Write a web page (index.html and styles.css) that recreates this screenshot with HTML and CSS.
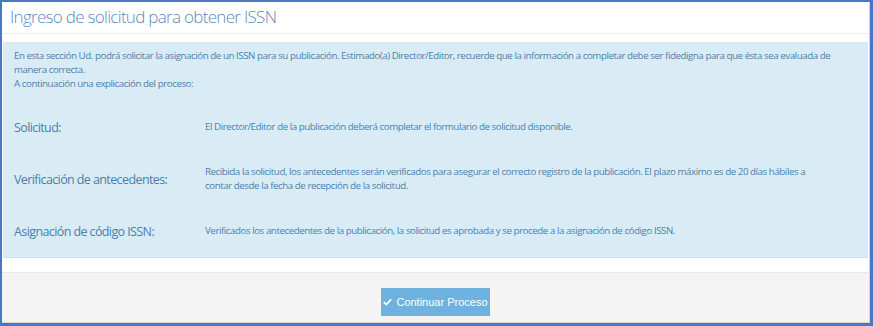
FILE: index.html
```html
<!DOCTYPE html>
<html lang="es">
<head>
<meta charset="utf-8"/>
<meta content="width=device-width, initial-scale=1.0" name="viewport"/>
<title>Ingreso de solicitud ISSN</title>
<link rel="stylesheet" href="styles.css">
</head>
<body>
<div class="frame">
  <div class="panel">
    <div class="panel-heading">
      <h3 class="panel-title">Ingreso de solicitud para obtener ISSN</h3>
    </div>
    <div class="panel-body">
      <div class="alert-info">
        <p class="intro">En esta sección Ud. podrá solicitar la asignación de un ISSN para su publicación. Estimado(a) Director/Editor, recuerde que la información a completar debe ser fidedigna para que ésta sea evaluada de manera correcta.<br>A continuación una explicación del proceso:</p>
        <div class="step">
          <div class="step-name">Solicitud:</div>
          <div class="step-text">El Director/Editor de la publicación deberá completar el formulario de solicitud disponible.</div>
        </div>
        <div class="step">
          <div class="step-name">Verificación de antecedentes:</div>
          <div class="step-text">Recibida la solicitud, los antecedentes serán verificados para asegurar el correcto registro de la publicación. El plazo máximo es de 20 días hábiles a contar desde la fecha de recepción de la solicitud.</div>
        </div>
        <div class="step">
          <div class="step-name">Asignación de código ISSN:</div>
          <div class="step-text">Verificados los antecedentes de la publicación, la solicitud es aprobada y se procede a la asignación de código ISSN.</div>
        </div>
      </div>
    </div>
    <div class="panel-footer">
      <button class="btn-continue">
        <svg class="check" viewBox="0 0 12 10" width="9" height="8"><path d="M1 5.2 L4.3 8.3 L11 1.6" fill="none" stroke="#ffffff" stroke-width="2.4"/></svg>
        Continuar Proceso
      </button>
    </div>
  </div>
</div>
</body>
</html>
```

FILE: styles.css
```css
html, body {
  margin: 0;
  padding: 0;
  background: #ffffff;
}
body {
  font-family: 'Open Sans', sans-serif;
}
.frame {
  width: 873px;
  height: 326px;
  box-sizing: border-box;
  border: 2px solid #4a76c6;
  border-right-width: 3px;
  border-bottom-width: 3px;
  background: #ffffff;
}
.panel {
  height: 100%;
  box-sizing: border-box;
  border-right: 1px solid #d6d6d6;
  border-bottom: 1px solid #d6d6d6;
  display: flex;
  flex-direction: column;
}
.panel-heading {
  height: 32px;
  box-sizing: border-box;
  padding: 3px 8px 0;
  border-bottom: 1px solid #ececec;
}
.panel-title {
  margin: 0;
  font-size: 17px;
  font-weight: 300;
  letter-spacing: -0.7px;
  color: #5b8cc0;
  line-height: 24px;
}
.panel-body {
  padding: 8px 1px 14px 1px;
}
.alert-info {
  background: #d9ecf6;
  border-bottom: 1px solid #c8e4f2;
  padding: 7px 14px 0 11px;
  color: #4b82ad;
  font-size: 9.75px;
  letter-spacing: -0.45px;
}
.intro {
  margin: 0 0 10px;
  line-height: 14px;
}
.step {
  height: 52px;
  display: flex;
  align-items: center;
}
.step-name {
  width: 191px;
  flex: none;
  font-size: 12.5px;
  letter-spacing: -0.6px;
  color: #4a7ea8;
}
.step-text {
  flex: 1;
  line-height: 14px;
  padding-right: 24px;
}
.panel-footer {
  flex: 1;
  background: #f4f4f4;
  border-top: 1px solid #e8e8e8;
  display: flex;
  justify-content: center;
  padding-top: 15px;
}
.btn-continue {
  width: 109px;
  height: 28px;
  border: none;
  background: #6eb2df;
  color: #ffffff;
  font-family: 'Liberation Sans', Arial, sans-serif;
  font-size: 11px;
  padding: 0;
  display: flex;
  align-items: center;
  justify-content: center;
  gap: 4px;
  cursor: pointer;
}
.check {
  display: block;
}
```
